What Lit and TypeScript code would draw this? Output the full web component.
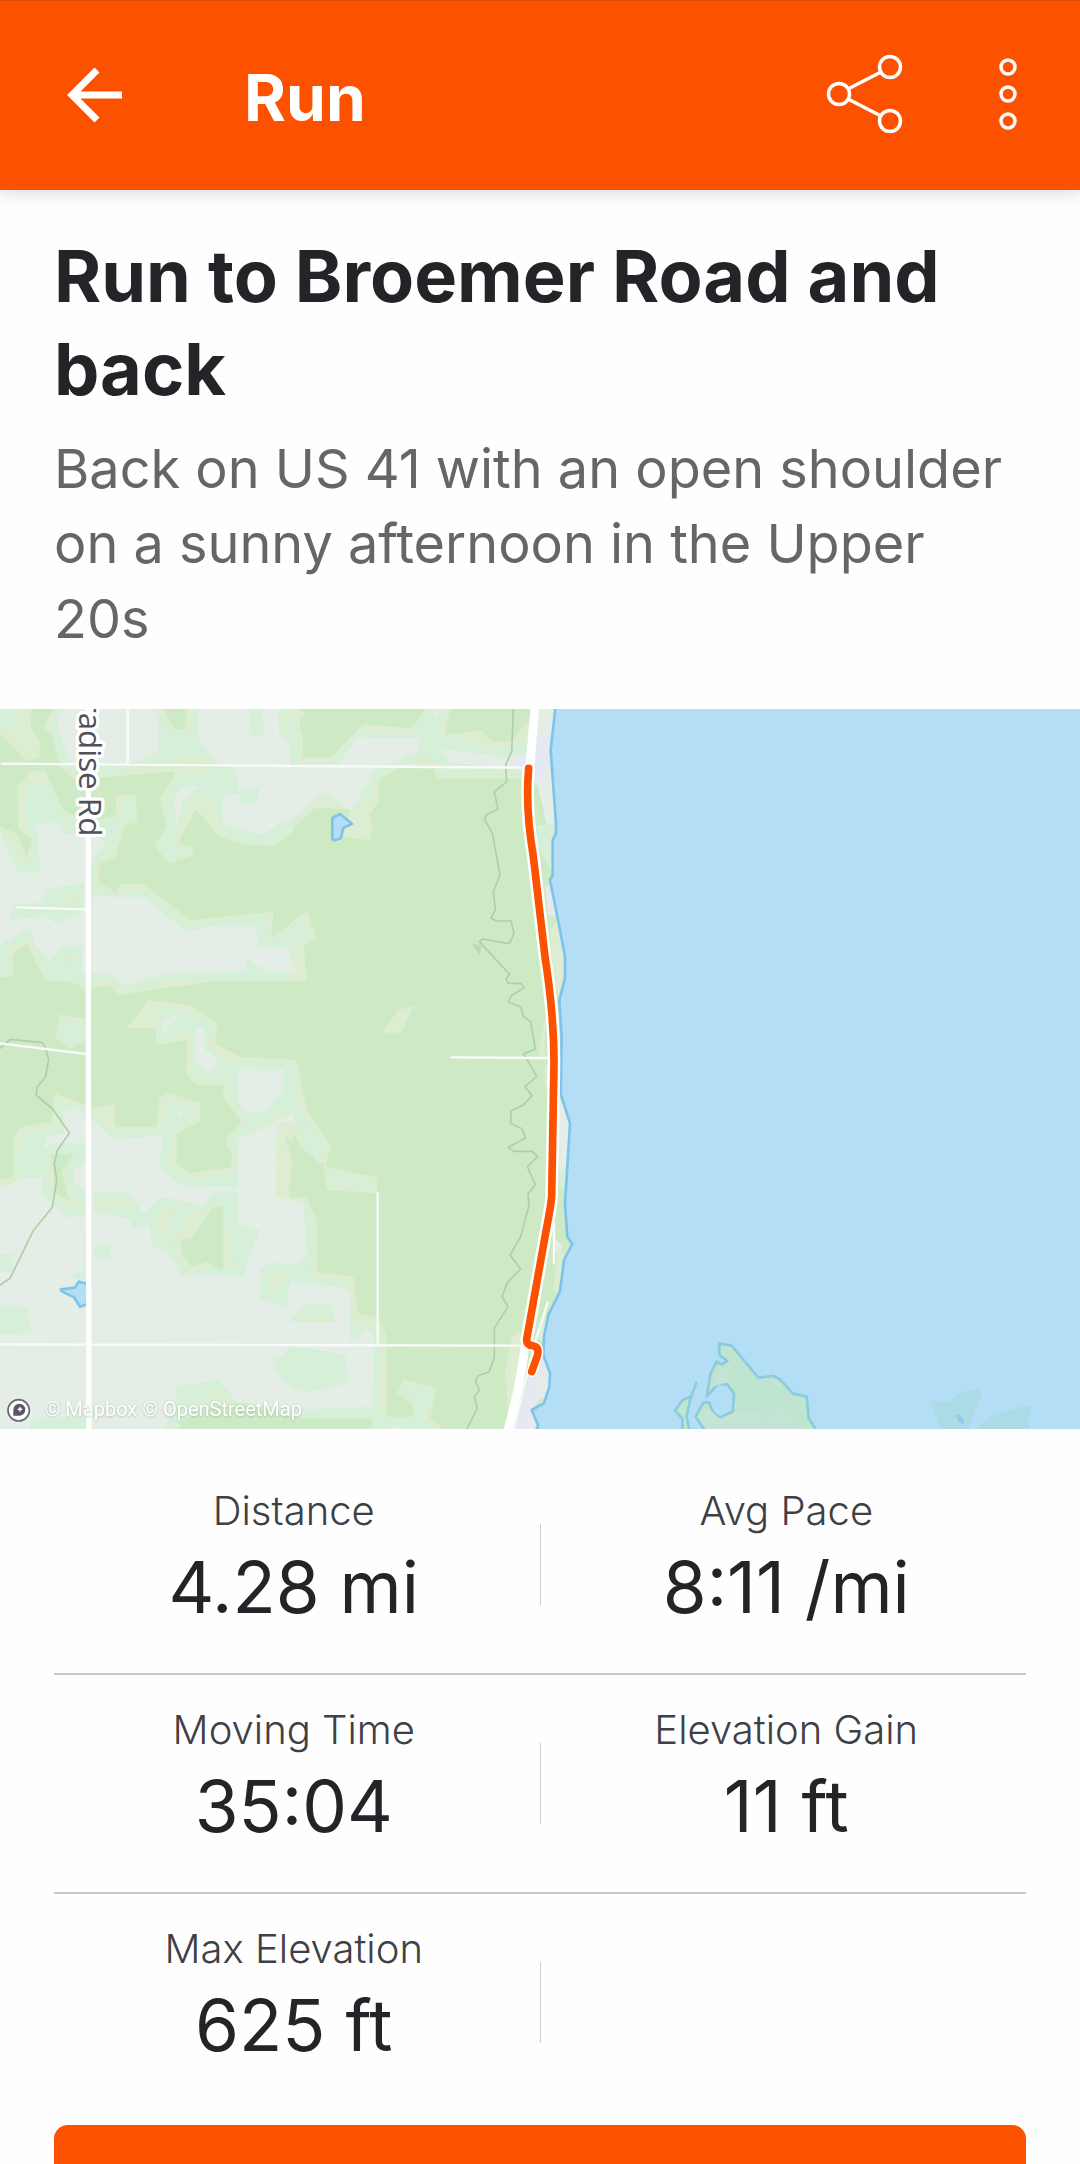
import { LitElement, html, svg, css, nothing } from "lit";
import { customElement, property } from "lit/decorators.js";

interface Stat {
  label: string;
  value: string;
}

const STAT_ROWS: Stat[][] = [
  [
    { label: "Distance", value: "4.28 mi" },
    { label: "Avg Pace", value: "8:11 /mi" },
  ],
  [
    { label: "Moving Time", value: "35:04" },
    { label: "Elevation Gain", value: "11 ft" },
  ],
  [{ label: "Max Elevation", value: "625 ft" }],
];

@customElement("app-header")
class AppHeader extends LitElement {
  @property() heading = "";

  static styles = css`
    :host {
      display: block;
      position: relative;
      z-index: 1;
    }
    .bar {
      display: flex;
      align-items: center;
      box-sizing: border-box;
      height: 190px;
      padding: 0 38px 0 56px;
      border-top: 1px solid #dd4a08;
      background: #fc5200;
      color: #fff;
      box-shadow: 0 2px 16px rgba(0, 0, 0, 0.16);
    }
    .heading {
      flex: 1;
      margin: 0 0 0 116px;
      padding-top: 4px;
      font-size: 64px;
      line-height: 80px;
      font-weight: 700;
    }
    .icon {
      display: flex;
      padding: 0 0 2px;
      border: 0;
      background: none;
      color: inherit;
    }
    .more {
      margin-left: 68px;
    }
    svg {
      display: block;
      fill: none;
      stroke: currentColor;
    }
  `;

  render() {
    return html`
      <header class="bar">
        <button class="icon" aria-label="Back">
          <svg width="72" height="72" viewBox="0 0 72 72" stroke-width="7">
            <path d="M66 36H17M41 11L16 36L41 61" />
          </svg>
        </button>
        <h1 class="heading">${this.heading}</h1>
        <button class="icon" aria-label="Share">
          <svg width="80" height="84" viewBox="0 0 80 84" stroke-width="3.5">
            <circle cx="13" cy="41" r="10.5" />
            <circle cx="64" cy="14" r="10.5" />
            <circle cx="64" cy="68" r="10.5" />
            <path d="M22 36L55 19M22 46L55 63" />
          </svg>
        </button>
        <button class="icon more" aria-label="More options">
          <svg width="68" height="84" viewBox="0 0 68 84" stroke-width="3.5">
            <circle cx="34" cy="14" r="7" />
            <circle cx="34" cy="41" r="7" />
            <circle cx="34" cy="68" r="7" />
          </svg>
        </button>
      </header>
    `;
  }
}

@customElement("route-map")
class RouteMap extends LitElement {
  static styles = css`
    :host {
      display: block;
    }
    svg {
      display: block;
      width: 100%;
      height: auto;
      background: #cdeac5;
    }
    .scrub {
      fill: #dcedd1;
    }
    .grass {
      fill: #d6efd9;
    }
    .open {
      fill: #e4eee6;
    }
    .wood {
      fill: #cdeac5;
    }
    .town {
      fill: #e6e8f2;
    }
    .water {
      fill: #b4def6;
    }
    .shore {
      stroke: #7fc3ea;
      stroke-width: 8;
      stroke-linejoin: round;
    }
    .line {
      fill: none;
      stroke-linejoin: round;
      stroke-linecap: round;
    }
    .trail {
      stroke: #aed0a6;
      stroke-width: 5;
    }
    .lane {
      stroke: #f8fbf8;
      stroke-width: 7;
    }
    .road {
      stroke: #fff;
      stroke-width: 16;
    }
    .highway {
      stroke: #fff;
      stroke-width: 26;
    }
    .casing {
      stroke: #fff;
      stroke-width: 38;
    }
    .route {
      stroke: #fc5200;
      stroke-width: 23;
    }
    .island {
      fill: #bfe4cf;
      stroke: #8ccbdc;
      stroke-width: 8;
      stroke-linejoin: round;
    }
    .shoal {
      fill: #abdbe4;
    }
    .street {
      font-family: "Open Sans", "Noto Sans", sans-serif;
      font-size: 94px;
      font-weight: 500;
      fill: #50505c;
      stroke: #fff;
      stroke-width: 20;
      stroke-linejoin: round;
      paint-order: stroke;
    }
    .credit {
      font-family: Roboto, sans-serif;
      font-size: 60px;
      fill: #fff;
      filter: drop-shadow(0 2px 3px rgba(90, 110, 100, 0.4));
    }
  `;

  private northwest = svg`
    <g transform="translate(0 -27)">
      <path class="scrub" d="M0 27H95L92 80L120 125L118 175L75 182L30 130L0 100Z" />
      <path class="grass" d="M0 27H45L40 85L0 95Z" />
      <path class="scrub" d="M160 27L128 85L155 100L180 200L225 240L530 212L478 300L500 375L490 400L463 435L505 490L583 465L575 440L533 432L587 328L660 410L740 436L820 438L880 395V27Z" />
      <path class="grass" d="M170 27L150 90L190 190L300 228L480 205L540 222L500 300L505 400L475 430L505 485L575 462L525 430L535 370L560 330L590 285L640 290L665 390L740 430L820 433L880 385V27Z" />
      <path class="scrub" d="M300 222L470 190L600 160L632 185L640 225L530 212L400 226Z" />
      <path class="open" d="M190 27L170 70L210 190H400L475 155V60L460 27Z" />
      <path class="open" d="M600 27H745L755 108L795 112L785 27H835L838 112L870 130L868 180L900 200V350L835 370L790 405L670 372L668 290L720 280L705 205L650 190L600 125L590 90Z" />
      <path class="scrub" d="M468 27H578L570 100L510 95Z" />
      <path class="wood" d="M492 27H557V88H522Z" />
      <path class="scrub" d="M840 60L870 27H900V120L850 100Z" />
      <path class="grass" d="M720 275L780 258L770 310L720 308Z" />
      <path class="scrub" d="M587 285H640L650 400L590 328Z" />
      <path class="open" d="M540 262L595 258L550 300L530 370L522 310Z" />
      <path class="scrub" d="M0 380L50 400L80 475L95 420L55 385L52 260L95 212H135L190 330L240 360V410L350 345L345 285L405 283L415 365L375 375L345 475L300 490L295 548L350 577L360 552H430L570 660L820 635L815 712L900 655V843H650L350 885L330 855L245 870L235 843H135L80 730L38 765V830H0Z" />
      <path class="grass" d="M0 390L60 490H100V400L75 370V270L100 245L150 260L195 350L240 370L355 348L370 300H400L410 355L360 370L335 460L285 490V560L340 590L430 568L560 682L640 665L800 645L805 720L900 690V840H660L520 835L380 870L320 835L240 855L140 830L90 720L30 740V830H0Z" />
      <path class="open" d="M0 400L55 518H122L108 370L178 368L190 405L240 400L300 415L315 435L275 480V590L435 592L560 698L650 675H768L772 742H865L890 815H800L740 775V815L510 818L375 858L325 820H245V740H185L150 785L105 735L95 680L0 735Z" />
      <path class="grass" d="M135 568L250 550V640L165 670L125 630Z" />
      <path class="grass" d="M42 612L130 608V648L28 660Z" />
      <path class="scrub" d="M185 578H235V612H190ZM195 760H225V788H195Z" />
      <path class="scrub" d="M178 943L255 957V1020L208 1048L165 1010Z" />
      <path class="grass" d="M185 960L252 970L245 1015L210 1040L175 1005Z" />
    </g>
  `;

  private north = svg`
    <g transform="translate(870 -27)">
      <path class="scrub" d="M0 27L50 40L12 70L38 100V170H125L220 72L360 85L410 27H480L465 105L575 90L605 125H660L720 60V235L445 238L430 205H330L270 235L265 310L235 345L248 385L238 420L160 410L180 330L120 325H75L0 390Z" />
      <path class="grass" d="M0 60L25 80L28 190L125 185L200 100L360 105L400 40H470L450 110L520 115L600 150L720 120V215L450 218L435 195L280 208L235 290L190 330L150 325L120 295L80 288L0 380Z" />
      <path class="open" d="M165 165L205 112L390 115L385 150L310 190L255 208L185 330L120 285H80L0 365V205L150 190Z" />
      <path class="open" d="M450 145L640 172L720 160V205L480 190ZM430 30L455 32L435 55Z" />
      <path class="scrub" d="M370 175H430L450 200H370ZM278 998L322 932L374 915L333 998Z" />
      <path class="open" d="M745 27H800L785 150L800 370L770 375L740 240L715 190Z" />
      <path class="grass" d="M740 375H798L790 525L745 440Z" />
      <path class="town" d="M752 110L782 98V160L750 255H735L720 180ZM660 185L715 160V205H665ZM765 560L785 555L800 650L775 645Z" />
      <path class="scrub" d="M780 690L808 655L825 800L808 900L790 830ZM765 950L745 1060L780 1110L765 1180Z" />
      <path class="line trail" d="M670 27L665 155L647 195L650 245L613 275L624 328L592 342L583 357L607 400L630 525L610 575L616 628L603 655L620 663H663L672 700L660 728L650 730L580 717L568 725L658 822L648 838L655 850H692L703 863L663 888L655 906L692 920L700 948L722 965L736 1047L700 1062L712 1080" />
      <path fill="#b9d9ae" d="M546 732L574 735L570 768Z" />
    </g>
  `;

  private southwest = svg`
    <g transform="translate(0 1053)">
      <path class="scrub" d="M870 -410L922 -448L948 -365L912 -345L920 -237H870Z" />
      <path class="scrub" d="M0 355H40V235L65 200L155 185L165 100L285 145L345 130V200H470L478 115L505 100L600 128V185L530 220V310L570 340L690 322L697 290L675 240L725 185L670 110V75H590L558 40L560 -60L470 -45L465 -95H380L445 -180L570 -165L655 -110L645 -50L720 -10L890 0L920 150L993 255L975 320L1133 352L1132 400L980 390L970 310L920 300L880 215L850 225L880 290L870 412L920 415L950 480V635L1060 650L1075 760L1135 775L1160 830V1107H0Z" />
      <path class="grass" d="M0 385L75 350L50 345L60 240L80 215L160 205L170 120L250 140L340 225L490 210L495 140L520 120L580 140L575 180L520 215L500 320L560 355L700 340L712 300L690 240L735 185L690 110V70L600 60L575 20L570 -90L475 -50V-165L560 -145L635 -110L620 -40L680 0L870 20L900 170L870 140L740 220L712 340V395L828 410L850 420L870 430L920 435L935 490V650L1045 665L1060 790L1130 800L1140 840L1135 1065L900 1070L0 1107Z" />
      <path class="grass" d="M870 -395L915 -420L930 -370L880 -340ZM870 0L890 60L905 150L975 260L960 300L930 280L870 150ZM980 335L1115 358L1110 385L985 375Z" />
      <path class="open" d="M0 390L75 355H130L135 230L190 220V150L230 140L275 180L345 240L485 225L480 320L550 380H712V240L882 158V185L830 190L828 410L910 430L920 560L924 590L870 618V665L1020 680L1050 700V840L1075 840L1095 810L1120 820L1118 1040L870 1050L700 1107H0Z" />
      <path class="grass" d="M280 395H390L430 462L485 410L610 437L640 395H712V490L780 510L728 647H545L500 575L460 565L445 495L405 507L385 475L280 455Z" />
      <path class="scrub" d="M285 405H375L405 447L285 450ZM490 440L540 430L515 460V535L470 530V465ZM560 470L660 420L690 560L710 625L560 635L510 570L540 500ZM735 515L765 520L750 545Z" />
      <path class="wood" d="M670 437V632L622 605L575 620L545 580V538H572L640 440Z" />
      <path class="grass" d="M125 280L150 250H255V310L220 330L225 370L255 395V465L205 475L125 400Z" />
      <path class="scrub" d="M140 285L230 283L195 335L215 400L250 420V445L210 450L150 400Z" />
      <path class="wood" d="M155 283H220L185 335L207 420L165 400Z" />
      <path class="scrub" d="M830 190L880 215L870 412L838 400Z" />
      <path class="wood" d="M852 225L940 290L975 350L980 400L870 412L868 380L878 300Z" />
      <path class="open" d="M715 25L850 28V85L800 155H735L710 120ZM590 -95H610L615 -30L655 0L627 42L585 0ZM488 -120L540 -138L488 -78ZM530 157L553 158L543 178ZM870 -310L890 -270L870 -260Z" />
      <path class="grass" d="M780 630L815 607L900 620L935 600V650L870 665L860 742L783 718ZM870 785L910 732L995 735L1005 787ZM870 855L1035 885L1048 970L910 1000L845 960L812 900L850 887ZM285 555L332 550V605L280 590ZM0 580H40L35 635L0 637ZM0 740L80 742L95 815L0 825ZM530 980L655 958L710 1025L900 1050L1140 1040V1107H495L530 1010ZM90 1080L260 1070V1107H90ZM205 650L235 637L258 640V670Z" />
      <path class="scrub" d="M800 640L830 625L860 655L830 700L800 680ZM610 990L665 985L700 1030L660 1050ZM895 762H985V785H890Z" />
      <path class="wood" d="M540 1107V1085L640 1040L720 1030L900 1075L1115 1075V1107Z" />
      <path class="line trail" d="M0 -35L30 -62L128 -52L138 -30L146 -2L137 50L112 80L108 105L158 147L208 218L172 272L163 310L170 360L157 442L100 512L30 655L0 675" />
      <path class="water shore" d="M182 688L225 683L236 665L262 672V732L240 740L222 712L185 694Z" />
    </g>
  `;

  private south = svg`
    <g transform="translate(870 1053)">
      <path class="scrub" d="M340 958L442 985L420 1075L460 1107H230L270 1070H370L365 1030L322 1000Z" />
      <path class="grass" d="M350 975L430 990L410 1070H370L375 1030ZM250 1075H410L425 1107H245Z" />
      <path class="open" d="M285 1103L315 1098L335 1107H285Z" />
      <path class="scrub" d="M690 810L665 830L645 930L655 1080L700 900Z" />
      <path class="open" d="M812 120L840 190L832 320L808 330L800 200ZM790 530L820 560L800 580Z" />
      <path class="grass" d="M808 330L825 320L832 380L808 385ZM770 740L740 830L760 850Z" />
      <path class="scrub" d="M805 560L825 590L805 695L790 690Z" />
      <path class="town" d="M755 880L780 940L778 980L725 1050L745 1097L735 1107H675L720 930Z" />
      <path class="open" d="M750 945L780 930L765 1020L732 1000Z" />
      <path class="line trail" d="M712 0L740 50L705 80L726 107L700 135L663 152L662 190L697 207L707 233L655 262L672 274H727L743 290L712 320L736 374L714 402L717 435L692 530L660 585L692 627L652 668L636 710L654 740L613 805V893L597 935L563 948L557 965L568 990L553 1010L562 1045L530 1107" />
    </g>
  `;

  private lake = svg`
    <path class="water shore" d="M1668 -20L1652 123L1668 343V373L1658 393V498L1650 513L1680 663L1695 743V808L1678 873L1685 983L1682 1153L1710 1243L1702 1373L1695 1483L1702 1583L1717 1605L1692 1653L1680 1748L1645 1818L1632 1883L1630 1938L1650 1993L1648 2033L1632 2083L1595 2103L1615 2150L1600 2180H3280V-20Z" />
    <path class="water shore" d="M997 327L1020 315L1056 344L1030 356L1022 388L1004 394L997 390Z" />
    <g transform="translate(1920 1833)">
      <path class="island" d="M200 340L167 290L190 248H208C215 275 225 288 240 292L278 275L282 220L262 194L235 190L200 230L212 160L230 125L245 134L262 123L238 105V70L275 77L355 173L400 168L420 178L458 220L500 230L506 295L535 340Z" />
      <path fill="#c6e4d6" d="M200 327L180 295L205 265L240 298L290 275L360 278L380 312L422 262L455 300L480 327ZM245 145L285 180L215 200ZM370 178L405 178L420 200Z" />
      <path class="island" d="M127 340V295L105 272L128 240L152 230L140 290L150 340Z" />
      <path class="line" stroke="#8ccbdc" stroke-width="8" d="M152 235L169 188" />
      <path class="shoal" d="M900 327L872 243L925 246L968 216L1024 204L1022 235L985 327ZM1005 327L1050 290L1150 258L1175 262L1162 300L1172 327Z" />
      <path fill="#8fcbea" d="M948 286L962 284L974 305L968 313L955 305Z" />
    </g>
  `;

  private roads = svg`
    <path class="line lane" d="M5 164L900 171L1590 176M383 0V166M48 595L258 601M0 1003L258 1035M1355 1045L1650 1047M0 1906L1570 1910M1133 1453V1906M1662 1543V1663M1643 1781L1605 1900L1540 2165" />
    <path class="line road" d="M265 -10V1080L267 2170" />
    <path class="line highway" d="M1605 -10L1590 170L1586 210" />
    <path class="line highway" d="M1578 1890C1565 2000 1545 2090 1520 2175" />
    <path class="line casing" d="M1586 178C1578 265 1585 353 1600 443L1635 743C1655 873 1662 973 1662 1060L1655 1463C1650 1513 1640 1553 1632 1600L1580 1891" />
    <path class="line" stroke="#fff" stroke-width="32" d="M1580 1891Q1578 1908 1598 1910Q1620 1914 1612 1940L1595 1988" />
    <path class="line route" d="M1586 178C1578 265 1585 353 1600 443L1635 743C1655 873 1662 973 1662 1060L1655 1463C1650 1513 1640 1553 1632 1600L1580 1891Q1578 1908 1598 1910Q1620 1914 1612 1940L1595 1988" />
  `;

  private labels = svg`
    <text class="street" text-anchor="end" transform="translate(236 382) rotate(90)">radise Rd</text>
    <circle cx="56" cy="2104" r="32" fill="#fff" stroke="#6b6874" stroke-width="5" />
    <path fill="#5a5763" d="M40 2120V2102A18 18 0 1 1 58 2120Z" />
    <path fill="#fff" d="M60 2092L63 2098L69 2101L63 2104L60 2110L57 2104L51 2101L57 2098Z" />
    <text class="credit" x="134" y="2120">© Mapbox © OpenStreetMap</text>
  `;

  render() {
    return html`
      <svg viewBox="0 0 3240 2160" role="img" aria-label="Route map">
        ${this.northwest}${this.southwest}${this.north}${this.south}
        ${this.lake}${this.roads}${this.labels}
      </svg>
    `;
  }
}

@customElement("stat-list")
class StatList extends LitElement {
  @property({ attribute: false }) rows: Stat[][] = [];

  static styles = css`
    :host {
      display: block;
      padding: 0 48px;
    }
    .row {
      display: flex;
      align-items: flex-start;
      margin: 0;
      padding: 26px 0 39px;
    }
    .rule {
      height: 2px;
      margin: 0 6px;
      border: 0;
      background: #c9c8cd;
    }
    .divider {
      width: 1px;
      height: 81px;
      margin-top: 42px;
      background: #cfced3;
    }
    .stat {
      flex: 1;
      text-align: center;
    }
    .label {
      font-size: 40px;
      line-height: 58px;
      font-weight: 300;
      color: #3f3f46;
    }
    .value {
      margin: 0;
      font-size: 71px;
      line-height: 94px;
      color: #242428;
    }
  `;

  private cell(stat?: Stat) {
    return html`
      <div class="stat">
        ${stat
          ? html`<dt class="label">${stat.label}</dt>
              <dd class="value">${stat.value}</dd>`
          : nothing}
      </div>
    `;
  }

  render() {
    return this.rows.map(
      (row, i) => html`
        ${i > 0 ? html`<hr class="rule" />` : nothing}
        <dl class="row">
          ${this.cell(row[0])}
          <div class="divider"></div>
          ${this.cell(row[1])}
        </dl>
      `
    );
  }
}

@customElement("app-root")
class AppRoot extends LitElement {
  static styles = css`
    :host {
      display: block;
      height: 100vh;
      overflow-y: auto;
      scrollbar-width: none;
      background: #fefefe;
      font-family: Inter, Roboto, sans-serif;
    }
    .intro {
      padding: 39px 54px 53px;
    }
    .title {
      margin: 0;
      font-size: 72px;
      line-height: 93px;
      font-weight: 700;
      color: #242428;
    }
    .note {
      margin: 16px 0 0;
      font-size: 54px;
      line-height: 75px;
      color: #666;
    }
    .stats {
      padding-top: 27px;
    }
    .action {
      padding: 14px 54px 54px;
    }
    .primary {
      display: block;
      width: 100%;
      height: 120px;
      border: 0;
      border-radius: 14px;
      background: #fc5200;
    }
  `;

  render() {
    return html`
      <app-header heading="Run"></app-header>
      <main>
        <section class="intro">
          <h2 class="title">Run to Broemer Road and back</h2>
          <p class="note">
            Back on US 41 with an open shoulder on a sunny afternoon in the
            Upper 20s
          </p>
        </section>
        <route-map></route-map>
        <stat-list class="stats" .rows=${STAT_ROWS}></stat-list>
        <div class="action">
          <button class="primary" aria-label="View details"></button>
        </div>
      </main>
    `;
  }
}
